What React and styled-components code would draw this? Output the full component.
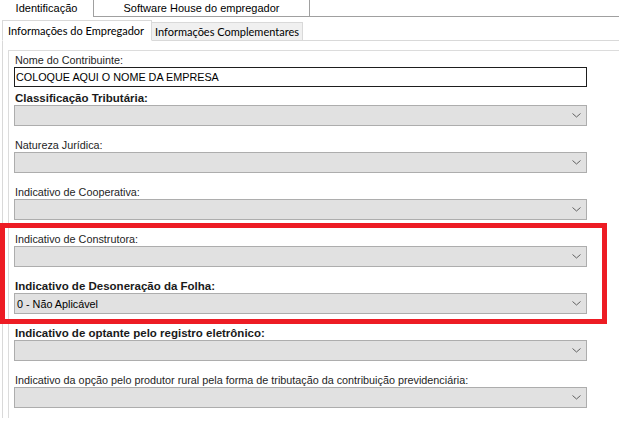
import React from "react";
import styled, { createGlobalStyle } from "styled-components";

const GlobalStyle = createGlobalStyle`
  html, body {
    margin: 0;
    padding: 0;
    background: #ffffff;
    overflow: hidden;
  }
`;

const Window = styled.div`
  position: relative;
  width: 619px;
  height: 445px;
  background: #ffffff;
  font-family: "Liberation Sans", Arial, sans-serif;
  color: #000;
  overflow: hidden;
`;

const OuterStrip = styled.div`
  display: flex;
  height: 17px;
`;

const OuterTab = styled.div`
  box-sizing: border-box;
  width: ${(p) => p.$width}px;
  height: 17px;
  display: flex;
  align-items: center;
  justify-content: center;
  font-size: 11px;
  border-bottom: ${(p) => (p.$active ? "none" : "1px solid #a0a0a0")};
  border-left: ${(p) => (p.$active ? "none" : "1px solid #a0a0a0")};
  border-right: ${(p) => (p.$active ? "none" : "1px solid #a0a0a0")};
  padding-bottom: 1px;
`;

const OuterFill = styled.div`
  flex: 1;
  border-bottom: 1px solid #a0a0a0;
`;

const InnerStrip = styled.div`
  display: flex;
  align-items: flex-end;
  margin-top: 2px;
  padding-left: 2px;
  height: 21px;
`;

const InnerTab = styled.div`
  box-sizing: border-box;
  width: ${(p) => p.$width}px;
  height: ${(p) => (p.$active ? 21 : 19)}px;
  display: flex;
  align-items: center;
  padding-left: ${(p) => (p.$active ? 5 : 3)}px;
  font-family: Lato, "Liberation Sans", sans-serif;
  font-size: 11px;
  white-space: nowrap;
  background: ${(p) => (p.$active ? "#ffffff" : "#f0f0f0")};
  border: 1px solid #d9d9d9;
  border-bottom: ${(p) => (p.$active ? "1px solid #ffffff" : "1px solid #d9d9d9")};
  margin-left: ${(p) => (p.$active ? 0 : -1)}px;
  position: relative;
  z-index: ${(p) => (p.$active ? 1 : 0)};
  margin-bottom: -1px;
`;

const InnerFill = styled.div`
  flex: 1;
  border-bottom: 1px solid #d9d9d9;
  margin-bottom: -1px;
`;

const TabPage = styled.div`
  margin-left: 2px;
  border-left: 1px solid #d9d9d9;
  border-top: 1px solid #d9d9d9;
  padding: 9px 0 0 5px;
`;

const Panel = styled.div`
  box-sizing: border-box;
  height: 368px;
  border-left: 1px solid #dcdcdc;
  border-top: 1px solid #dcdcdc;
  padding: 2px 0 0 5px;
  display: flex;
  flex-direction: column;
`;

const Field = styled.div`
  display: flex;
  flex-direction: column;
  margin-bottom: ${(p) => p.$gap}px;
`;

const Label = styled.div`
  height: 14px;
  line-height: 14px;
  padding-left: 1px;
  font-size: ${(p) => (p.$bold ? 11.5 : 10.8)}px;
  font-weight: ${(p) => (p.$bold ? 700 : 400)};
  color: ${(p) => (p.$bold ? "#1a1a1a" : "#1e1e1e")};
  white-space: nowrap;
`;

const TextBox = styled.div`
  box-sizing: border-box;
  width: 573px;
  height: 20px;
  border: 1px solid #1e1e1e;
  background: #fff;
  display: flex;
  align-items: center;
  padding-left: 1px;
  font-size: 10.8px;
`;

const Combo = styled.div`
  box-sizing: border-box;
  width: 573px;
  height: 21px;
  border: 1px solid #adadad;
  background: #e1e1e1;
  display: flex;
  align-items: center;
  justify-content: space-between;
  padding: 0 5px 0 2px;
  font-size: 10.8px;
`;

const Chevron = () => (
  <svg width="9" height="5" viewBox="0 0 9 5">
    <path d="M0.5 0.5 L4.5 4 L8.5 0.5" fill="none" stroke="#606060" strokeWidth="1" />
  </svg>
);

const Highlight = styled.div`
  position: absolute;
  left: 0;
  top: 223px;
  width: 607px;
  height: 101px;
  box-sizing: border-box;
  border: 5px solid #ed1c24;
  pointer-events: none;
`;

const fields = [
  { label: "Classificação Tributária:", bold: true },
  { label: "Natureza Jurídica:" },
  { label: "Indicativo de Cooperativa:" },
  { label: "Indicativo de Construtora:" },
  { label: "Indicativo de Desoneração da Folha:", bold: true, value: "0 - Não Aplicável" },
  { label: "Indicativo de optante pelo registro eletrônico:", bold: true },
  {
    label:
      "Indicativo da opção pelo produtor rural pela forma de tributação da contribuição previdenciária:",
  },
];

export default function App() {
  return (
    <Window>
      <GlobalStyle />
      <OuterStrip>
        <OuterTab $active $width={93}>Identificação</OuterTab>
        <OuterTab $width={217}>Software House do empregador</OuterTab>
        <OuterFill />
      </OuterStrip>
      <InnerStrip>
        <InnerTab $active $width={150}>Informações do Empregador</InnerTab>
        <InnerTab $width={152}>Informações Complementares</InnerTab>
        <InnerFill />
      </InnerStrip>
      <TabPage>
        <Panel>
          <Field $gap={4}>
            <Label>Nome do Contribuinte:</Label>
            <TextBox>COLOQUE AQUI O NOME DA EMPRESA</TextBox>
          </Field>
          {fields.map((f) => (
            <Field key={f.label} $gap={12}>
              <Label $bold={f.bold}>{f.label}</Label>
              <Combo>
                <span>{f.value || ""}</span>
                <Chevron />
              </Combo>
            </Field>
          ))}
        </Panel>
      </TabPage>
      <Highlight />
    </Window>
  );
}
